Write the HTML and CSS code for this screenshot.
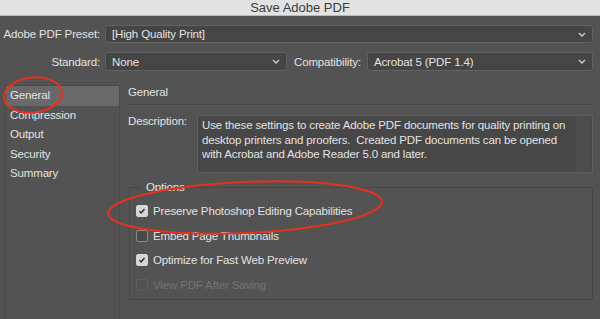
FILE: index.html
```html
<!DOCTYPE html>
<html>
<head>
<meta charset="utf-8">
<link rel="stylesheet" href="styles.css">
</head>
<body>
<div class="titlebar">Save Adobe PDF</div>
<div class="dialog">
  <div class="row">
    <span class="label">Adobe PDF Preset:</span>
    <div class="select grow"><span>[High Quality Print]</span><svg class="chev" viewBox="0 0 8 5"><path d="M1 1l3 3 3-3"/></svg></div>
  </div>
  <div class="row">
    <span class="label">Standard:</span>
    <div class="select std"><span>None</span><svg class="chev" viewBox="0 0 8 5"><path d="M1 1l3 3 3-3"/></svg></div>
    <span class="label2">Compatibility:</span>
    <div class="select grow"><span>Acrobat 5 (PDF 1.4)</span><svg class="chev" viewBox="0 0 8 5"><path d="M1 1l3 3 3-3"/></svg></div>
  </div>
  <div class="body">
    <ul class="nav">
      <li class="active">General</li>
      <li>Compression</li>
      <li>Output</li>
      <li>Security</li>
      <li>Summary</li>
    </ul>
    <div class="pane">
      <div class="heading">General</div>
      <div class="desc">
        <span class="desc-label">Description:</span>
        <div class="textarea">
          <p>Use these settings to create Adobe PDF documents for quality printing on desktop printers and proofers.&nbsp; Created PDF documents can be opened with Acrobat and Adobe Reader 5.0 and later.</p>
          <div class="scroll"></div>
        </div>
      </div>
      <div class="group">
        <span class="legend">Options</span>
        <div class="check"><span class="box on"><svg viewBox="0 0 12 12"><path d="M3 6.2l2 2 4-4.5"/></svg></span>Preserve Photoshop Editing Capabilities</div>
        <div class="check"><span class="box"></span>Embed Page Thumbnails</div>
        <div class="check"><span class="box on"><svg viewBox="0 0 12 12"><path d="M3 6.2l2 2 4-4.5"/></svg></span>Optimize for Fast Web Preview</div>
        <div class="check disabled"><span class="box"></span>View PDF After Saving</div>
      </div>
    </div>
  </div>
</div>
<svg class="annot" width="600" height="319" viewBox="0 0 600 319">
  <ellipse cx="33" cy="95" rx="29" ry="17.5" transform="rotate(-6 33 95)"/>
  <ellipse cx="245" cy="207.5" rx="137" ry="25.5" transform="rotate(-2.5 245 207.5)"/>
</svg>
</body>
</html>
```
FILE: styles.css
```css
* { box-sizing: border-box; }
html, body { margin: 0; padding: 0; }
body {
  width: 600px;
  height: 319px;
  overflow: hidden;
  background: #535353;
  font-family: "Liberation Sans", Arial, sans-serif;
  font-size: 11.5px;
  letter-spacing: -0.15px;
  color: #e2e2e2;
  position: relative;
}
.titlebar {
  height: 16px;
  background: #e2e2e2;
  border-bottom: 1px solid #b9b9b9;
  color: #3c3c3c;
  font-size: 13px;
  letter-spacing: 0;
  line-height: 15px;
  text-align: center;
}
.dialog {
  padding: 9px 7px 0 0;
}
.row {
  display: flex;
  align-items: center;
  height: 18px;
  margin-bottom: 9px;
  white-space: nowrap;
}
.row + .row { height: 19px; margin-bottom: 0; }
.label {
  width: 100px;
  text-align: right;
  margin-right: 5px;
  flex: none;
}
.label2 {
  margin-left: 7px;
  margin-right: 6px;
}
.select {
  height: 100%;
  background: #454545;
  border: 1px solid #626262;
  border-radius: 3px;
  display: flex;
  align-items: center;
  padding: 0 6px;
  justify-content: space-between;
}
.grow { flex: 1; }
.std { width: 182px; flex: none; }
.chev {
  width: 8px;
  height: 5px;
  fill: none;
  stroke: #d0d0d0;
  stroke-width: 1.3;
}
.body {
  display: flex;
  margin-top: 14px;
}
.nav {
  list-style: none;
  margin: 0 0 0 5px;
  padding: 0;
  width: 115px;
  height: 240px;
  border: 1px solid #4a4a4a;
  border-bottom: none;
  flex: none;
}
.nav li {
  height: 19.5px;
  line-height: 18px;
  padding-left: 4px;
}
.nav li.active { background: #696969; }
.pane {
  flex: 1;
  margin-left: 7px;
}
.heading {
  height: 20px;
  line-height: 15px;
  padding-left: 1px;
  border-bottom: 1px solid #474747;
  box-shadow: 0 1px 0 #5b5b5b;
}
.desc {
  display: flex;
  margin-top: 10px;
}
.desc-label {
  width: 70px;
  padding-left: 1px;
  flex: none;
}
.textarea {
  flex: 1;
  height: 58px;
  background: #474747;
  border: 1px solid #5e5e5e;
  display: flex;
}
.textarea p {
  margin: 0;
  flex: 1;
  padding: 2px 2px 2px 4px;
  line-height: 14.5px;
}
.scroll {
  width: 15px;
  background: #4d4d4d;
  margin: 1px 1px 1px 0;
}
.group {
  position: relative;
  margin: 14px 0 0 2px;
  height: 113px;
  border: 1px solid #474747;
  padding: 11px 0 0 6px;
}
.legend {
  position: absolute;
  top: -7px;
  left: 11px;
  padding: 0 5px;
  background: #535353;
  line-height: 12px;
}
.check {
  display: flex;
  align-items: center;
  height: 24.6px;
}
.box {
  width: 12px;
  height: 12px;
  border-radius: 2px;
  border: 1px solid #8a8a8a;
  background: #4a4a4a;
  margin-right: 5px;
  flex: none;
  display: flex;
}
.box.on {
  background: #d6d6d6;
  border-color: #d6d6d6;
}
.box svg {
  width: 10px;
  height: 10px;
  fill: none;
  stroke: #333;
  stroke-width: 1.8;
}
.check.disabled { color: #747474; }
.check.disabled .box { border-color: #5f5f5f; background: #525252; }
.annot {
  position: absolute;
  left: 0;
  top: 0;
  fill: none;
  stroke: #e5321f;
  stroke-width: 2;
  pointer-events: none;
}
```
